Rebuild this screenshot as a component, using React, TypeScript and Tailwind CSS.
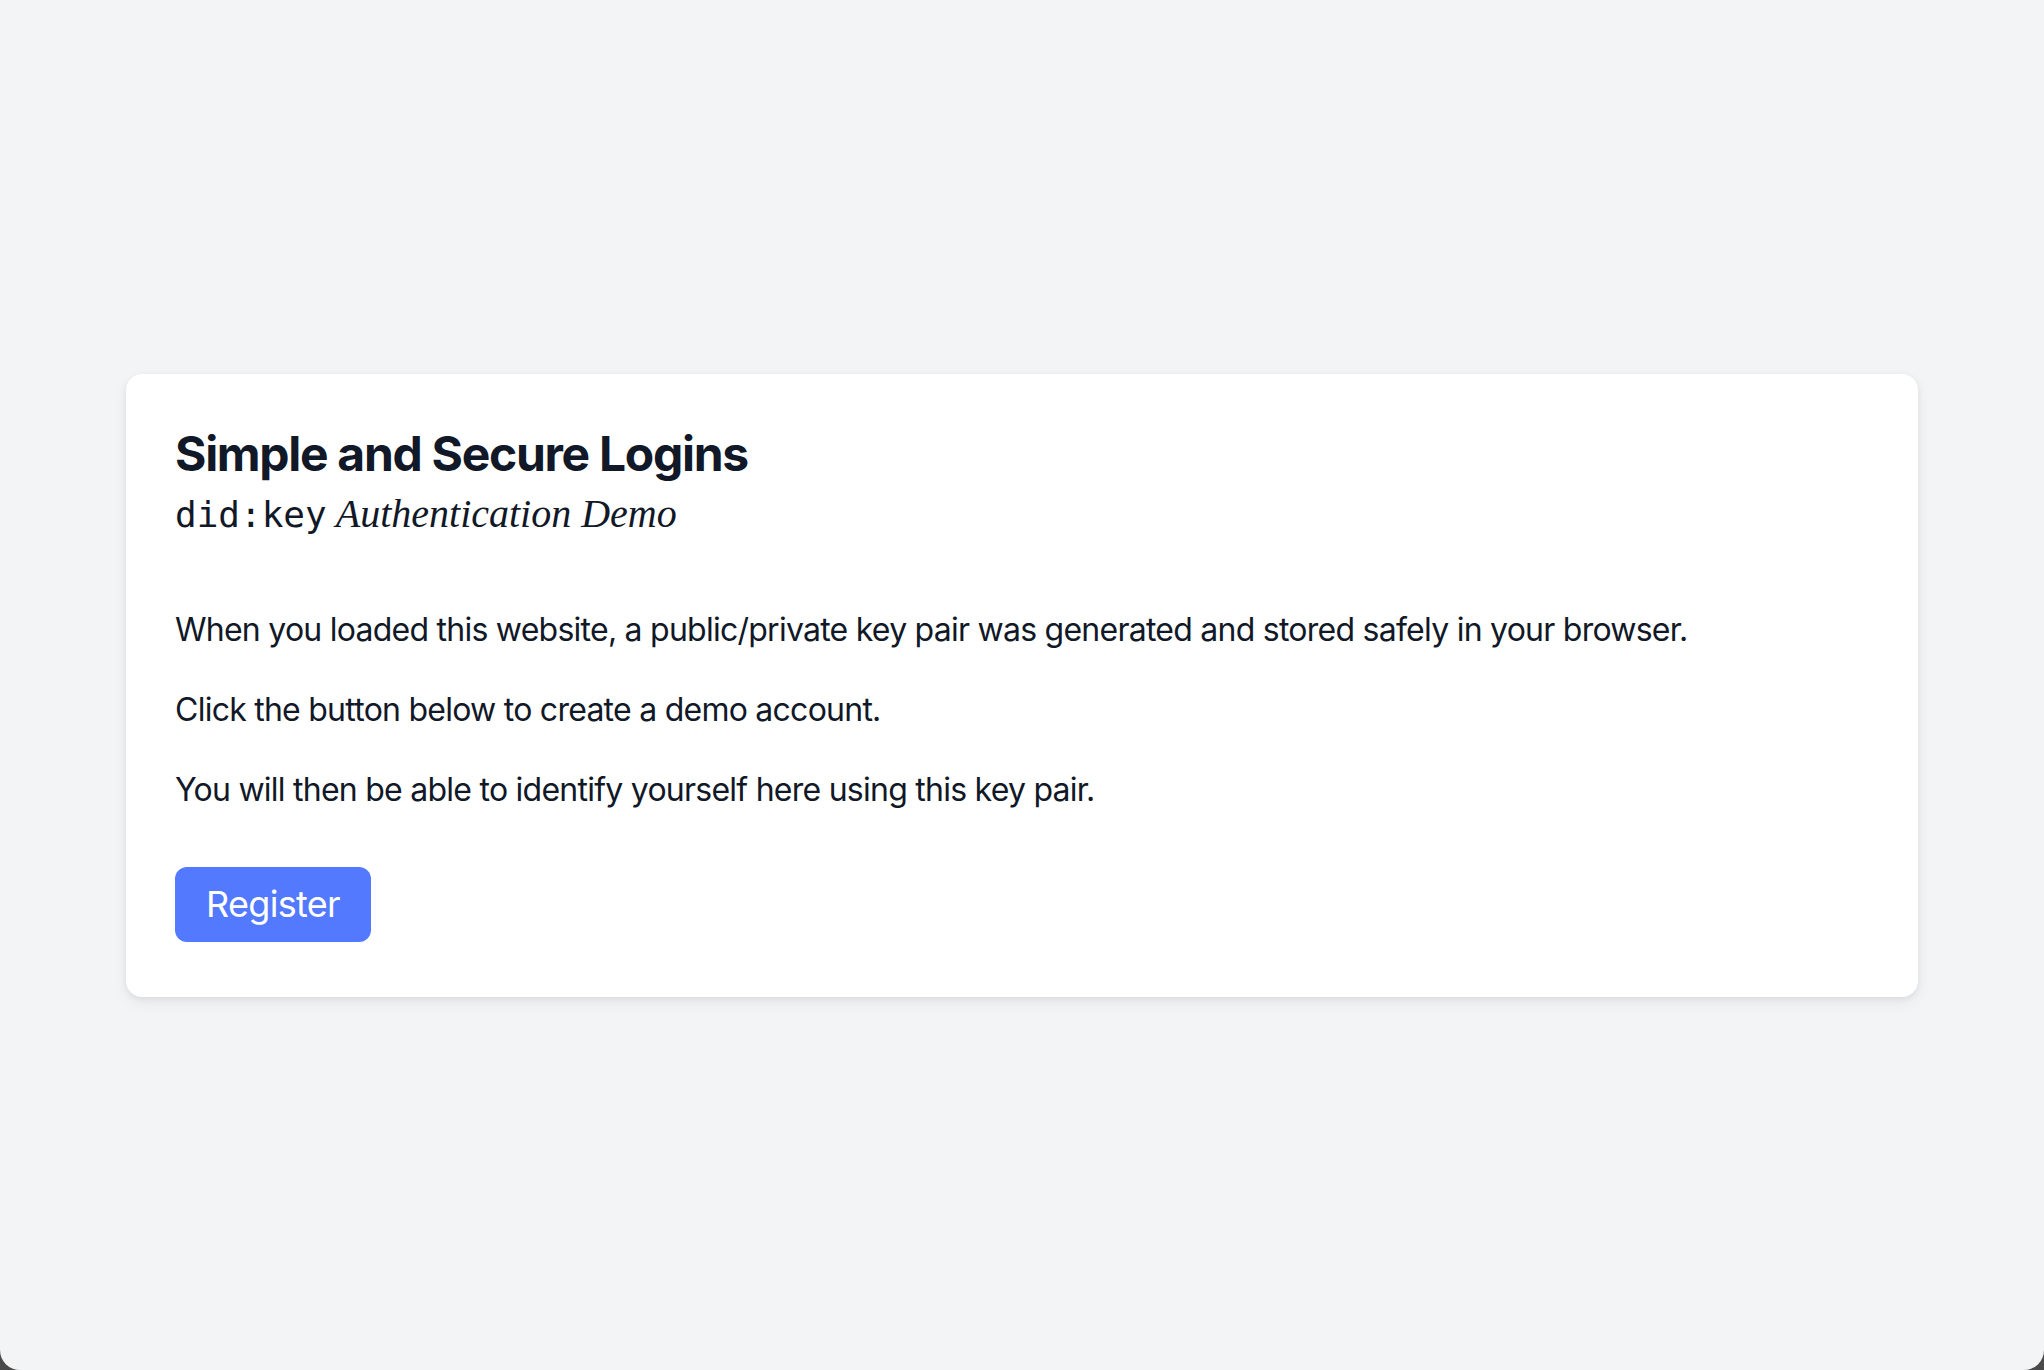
import React from "react";

export default function App() {
  return (
    <div className="w-[2044px] h-[1370px] bg-[#4a4a4a]">
      <div
        className="w-full h-full bg-[#f3f4f6] rounded-b-[20px] flex items-center justify-center"
        style={{ fontFamily: "Inter, 'Noto Sans', sans-serif" }}
      >
        <div className="w-[1792px] bg-white rounded-[16px] shadow-[0_2px_6px_rgba(0,0,0,0.07),0_6px_16px_rgba(0,0,0,0.05)] pt-[48px] pb-[55px] px-[49px] text-[#111827]">
          <h1 className="text-[48px] leading-[64px] font-bold tracking-[-1.3px]">
            Simple and Secure Logins
          </h1>
          <div className="h-[56px] flex items-baseline leading-[56px]">
            <span
              className="text-[36px]"
              style={{ fontFamily: "'DejaVu Sans Mono', 'Liberation Mono', monospace" }}
            >
              did:key
            </span>
            <span
              className="ml-[9px] text-[40px] italic"
              style={{ fontFamily: "'Liberation Serif', 'DejaVu Serif', serif" }}
            >
              Authentication Demo
            </span>
          </div>
          <div className="mt-[64px] flex flex-col gap-[32px] text-[32px] leading-[48px] tracking-[-0.75px]">
            <p>
              When you loaded this website, a public/private key pair was generated and stored safely in your browser.
            </p>
            <p>Click the button below to create a demo account.</p>
            <p>You will then be able to identify yourself here using this key pair.</p>
          </div>
          <button className="mt-[53px] h-[75px] w-[196px] rounded-[12px] bg-[#5279ff] text-white text-[36px] tracking-[-0.7px] flex items-center justify-center">
            Register
          </button>
        </div>
      </div>
    </div>
  );
}
